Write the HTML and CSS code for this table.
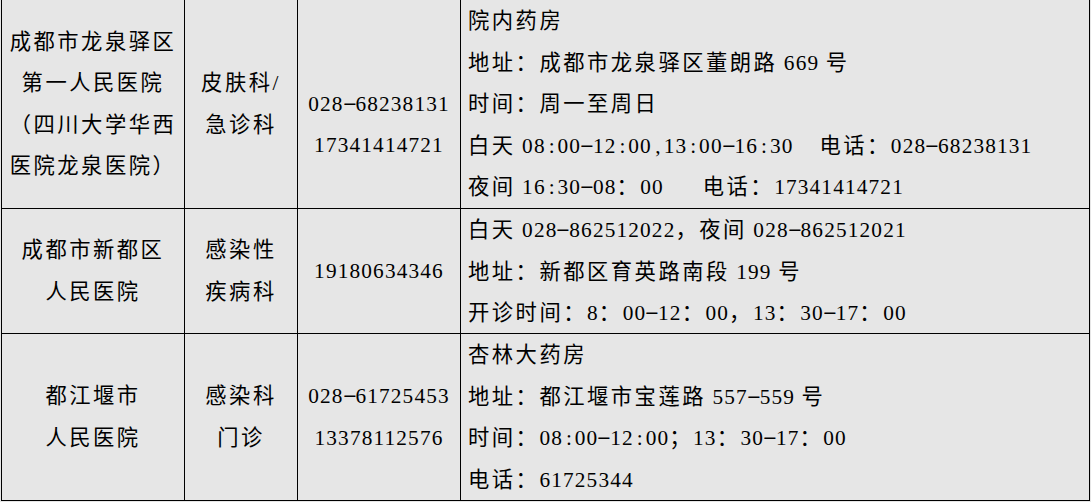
FILE: index.html
```html
<!DOCTYPE html>
<html lang="zh-CN">
<head>
<meta charset="utf-8">
<title>医院药房信息</title>
<link rel="stylesheet" href="styles.css">
</head>
<body>
<div class="table">
  <div class="cell c"><div>成都市龙泉驿区<br>第一人民医院<br>（四川大学华西<br>医院龙泉医院）</div></div>
  <div class="cell c"><div>皮肤科/<br>急诊科</div></div>
  <div class="cell c num shift"><div>028<span class="hw hy">-</span>68238131<br>17341414721</div></div>
  <div class="cell info">
    <div>院内药房</div>
    <div>地址：成都市龙泉驿区董朗路<span class="n"> 669 </span>号</div>
    <div>时间：周一至周日</div>
    <div>白天<span class="n"> 08<span class="hw">:</span>00<span class="hw hy">-</span>12<span class="hw">:</span>00<span class="hw">,</span>13<span class="hw">:</span>00<span class="hw hy">-</span>16<span class="hw">:</span>30&nbsp;&nbsp;&nbsp;&nbsp;</span>电话：<span class="n">028<span class="hw hy">-</span>68238131</span></div>
    <div>夜间<span class="n"> 16<span class="hw">:</span>30<span class="hw hy">-</span>08</span>：<span class="n">00&nbsp;&nbsp;&nbsp;&nbsp;&nbsp;&nbsp;</span>电话：<span class="n">17341414721</span></div>
  </div>

  <div class="cell c"><div>成都市新都区<br>人民医院</div></div>
  <div class="cell c"><div>感染性<br>疾病科</div></div>
  <div class="cell c num"><div>19180634346</div></div>
  <div class="cell info">
    <div>白天<span class="n"> 028<span class="hw hy">-</span>862512022</span>，夜间<span class="n"> 028<span class="hw hy">-</span>862512021</span></div>
    <div>地址：新都区育英路南段<span class="n"> 199 </span>号</div>
    <div>开诊时间：<span class="n">8</span>：<span class="n">00<span class="hw hy">-</span>12</span>：<span class="n">00</span>，<span class="n">13</span>：<span class="n">30<span class="hw hy">-</span>17</span>：<span class="n">00</span></div>
  </div>

  <div class="cell c"><div>都江堰市<br>人民医院</div></div>
  <div class="cell c"><div>感染科<br>门诊</div></div>
  <div class="cell c num"><div>028<span class="hw hy">-</span>61725453<br>13378112576</div></div>
  <div class="cell info">
    <div>杏林大药房</div>
    <div>地址：都江堰市宝莲路<span class="n"> 557<span class="hw hy">-</span>559 </span>号</div>
    <div>时间：<span class="n">08<span class="hw">:</span>00<span class="hw hy">-</span>12<span class="hw">:</span>00</span>；<span class="n">13</span>：<span class="n">30<span class="hw hy">-</span>17</span>：<span class="n">00</span></div>
    <div>电话：<span class="n">61725344</span></div>
  </div>
</div>
</body>
</html>
```
FILE: styles.css
```css
html, body {
  margin: 0;
  background: #e6e6e6;
}

.table {
  display: grid;
  grid-template-columns: 182px 112px 162px 628px;
  grid-template-rows: 208px 124px 166px;
  gap: 1px;
  background: #000;
  padding: 0 1px 1px 1px;
  margin-left: 1px;
  width: max-content;
  font-family: "Liberation Serif", "Noto Sans CJK SC", serif;
  font-size: 21.3px;
  line-height: 41.5px;
  letter-spacing: 2.5px;
  color: #000;
}

.cell {
  background: #e6e6e6;
}

.c {
  display: flex;
  flex-direction: column;
  justify-content: center;
  text-align: center;
  padding-top: 1px;
  box-sizing: border-box;
}

.shift {
  padding-top: 42px;
}

.num {
  letter-spacing: 1.15px;
}

.info {
  padding: 1px 0 0 7px;
  white-space: nowrap;
}

.n {
  letter-spacing: 1.15px;
}

.hw {
  display: inline-block;
  width: 11.8px;
  text-align: center;
  letter-spacing: 0;
  line-height: 1;
}

.hy {
  transform: scaleX(2);
  vertical-align: 0.08em;
}
```
